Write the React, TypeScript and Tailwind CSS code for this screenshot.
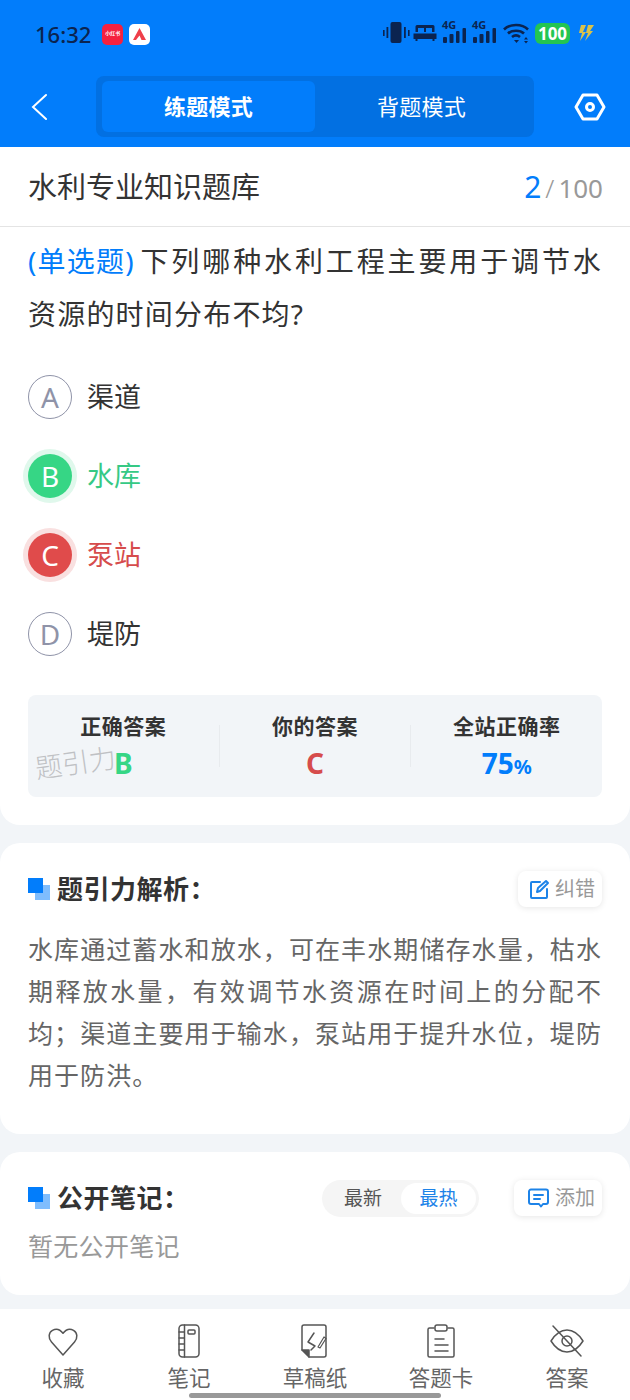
import React from 'react'

const options = [
  { key: 'A', text: '渠道', state: 'normal' },
  { key: 'B', text: '水库', state: 'right' },
  { key: 'C', text: '泵站', state: 'wrong' },
  { key: 'D', text: '堤防', state: 'normal' },
]

const HeadMark = () => (
  <span className="relative mr-[7px] h-[22px] w-[22px] shrink-0">
    <span className="absolute bottom-0 right-0 h-[15px] w-[15px] bg-[#7fbdfd]" />
    <span className="absolute left-0 top-0 h-[15px] w-[15px] bg-[#027dfb]" />
  </span>
)

const StatusIcons = () => (
  <div className="flex items-center text-[#0b2450]">
    <svg width="29" height="24" viewBox="0 0 29 24" fill="currentColor">
      <rect x="8.500" y="1" width="11" height="21" rx="2" />
      <rect x="1" y="9" width="1.600" height="6" />
      <rect x="4.500" y="6" width="1.800" height="11" />
      <rect x="22" y="6" width="1.800" height="11" />
      <rect x="26" y="9" width="1.600" height="6" />
    </svg>
    <svg className="ml-[2px]" width="24" height="20" viewBox="0 0 24 20" fill="currentColor">
      <path d="M4 2h16a1.500 1.500 0 0 1 1.500 1.500V9H2.500V3.500A1.500 1.500 0 0 1 4 2zM0.500 10.500h23V16h-2v2h-2v-2h-15v2h-2v-2h-2z" />
      <rect x="5" y="5" width="6" height="4" fill="#027dfb" />
      <rect x="13" y="5" width="6" height="4" fill="#027dfb" />
    </svg>
    {[0, 1].map((i) => (
      <div key={i} className="relative ml-[5px] h-[22px] w-[25px]">
        <span className="absolute left-0 top-[-3px] text-[11px] font-bold leading-[11px]">4G</span>
        <svg className="absolute bottom-0 left-0" width="25" height="22" viewBox="0 0 25 22" fill="currentColor">
          <rect x="1" y="15" width="4" height="6" rx="1" />
          <rect x="7.500" y="12" width="4" height="9" rx="1" />
          <rect x="14" y="9" width="3.500" height="12" rx="1" />
          <rect x="20.500" y="6" width="3.500" height="15" rx="1" />
        </svg>
      </div>
    ))}
    <svg className="ml-[6px]" width="27" height="22" viewBox="0 0 27 22" fill="none" stroke="currentColor" strokeWidth="2.600">
      <path d="M1 7.500C7 1.500 19 1.500 25 7.500" />
      <path d="M5 11.500C9 7.800 17 7.800 21 11.500" />
      <path d="M9 15c2.500-2 5.500-2 8 0" />
      <path d="M11 18h5l-2.500 3z" fill="currentColor" stroke="none" />
      <path d="M21 17.500l2-2.500 2 2.500zM21 19l2 2.500 2-2.500z" fill="currentColor" stroke="none" />
    </svg>
    <div className="ml-[5px] flex h-[21px] w-[35px] items-center justify-center rounded-[6px] bg-[#23c552] text-[17px] font-bold leading-none text-white">100</div>
    <svg className="ml-[8px]" width="17" height="18" viewBox="0 0 17 18">
      <path d="M3 1h5L5 8h3L2 17l2-8H1z" fill="#d9c24a" />
      <path d="M10 1h6l-4 6h3L7 17l3-8H8z" fill="#d9c24a" />
    </svg>
  </div>
)

const NavIcon = ({ children }: { children: React.ReactNode }) => (
  <svg width="34" height="36" viewBox="0 0 34 36" fill="none" stroke="#555" strokeWidth="1.500" strokeLinecap="round" strokeLinejoin="round">
    {children}
  </svg>
)

const navItems = [
  {
    label: '收藏',
    icon: <path d="M17 32 5.500 19C2 15 2.500 9.500 6.500 7.300c3.500-2 7.500-1 10.500 3 3-4 7-5 10.500-3 4 2.200 4.500 7.700 1 11.700z" />,
  },
  {
    label: '笔记',
    icon: (
      <>
        <rect x="7" y="2" width="20" height="32" rx="3.500" />
        <path d="M12.500 2v32M7 9h5.500M7 15h5.500M7 21h5.500M7 27h5.500" />
        <rect x="16" y="7" width="7" height="4" rx="1" />
      </>
    ),
  },
  {
    label: '草稿纸',
    icon: (
      <>
        <path d="M4 27V4a2 2 0 0 1 2-2h20a2 2 0 0 1 2 2v28a2 2 0 0 1-2 2H11" />
        <path d="M4 27h7v7z" fill="#555" />
        <path d="M16 10l-6 9 7 4-4 4" />
        <path d="M20 24l6-10 2 1.500-6 9.500z" strokeWidth="1.200" />
      </>
    ),
  },
  {
    label: '答题卡',
    icon: (
      <>
        <path d="M10 5H5.500a1.500 1.500 0 0 0-1.500 1.500v26A1.500 1.500 0 0 0 5.500 34h23a1.500 1.500 0 0 0 1.500-1.500v-26A1.500 1.500 0 0 0 28.500 5H24" />
        <rect x="11" y="2" width="12" height="6" rx="2" />
        <path d="M11 16h9M11 22h13M11 28h13" />
      </>
    ),
  },
  {
    label: '答案',
    icon: (
      <>
        <path d="M1 18C6 10 11.500 7 17 7s11 3 16 11c-5 8-10.500 11-16 11S6 26 1 18z" />
        <circle cx="17" cy="18" r="5" />
        <path d="M3 3l28 30" />
      </>
    ),
  },
]

export default function App() {
  return (
    <div
      className="flex h-[1400px] w-[630px] flex-col overflow-hidden bg-[#f2f5f8] text-[#333]"
      style={{ fontFamily: '"Noto Sans", "Noto Sans CJK SC", sans-serif' }}
    >
      <header className="h-[147px] shrink-0 bg-[#027dfb]">
        <div className="flex h-[76px] items-start justify-between pl-[35px] pr-[35px] pt-[21px]">
          <div className="flex items-center">
            <span className="text-[22px] font-medium leading-[26px] text-[#0b2450]">16:32</span>
            <span className="ml-[11px] flex h-[21px] w-[21px] items-center justify-center rounded-[5px] bg-[#f5213f] text-[5px] font-bold text-white">小红书</span>
            <span className="ml-[6px] flex h-[21px] w-[21px] items-center justify-center rounded-[5px] bg-white">
              <svg width="15" height="15" viewBox="0 0 15 15">
                <path d="M7.500 1 14 13H9.500L7.500 8.500 4 13H1z" fill="#ef3f4a" />
              </svg>
            </span>
          </div>
          <StatusIcons />
        </div>
        <div className="flex h-[61px] items-center">
          <button className="flex h-[61px] w-[96px] items-center pl-[31px]">
            <svg width="16" height="28" viewBox="0 0 16 28" fill="none" stroke="#fff" strokeWidth="2" strokeLinecap="round">
              <path d="M15 2 2 14l13 12" />
            </svg>
          </button>
          <div className="flex h-[61px] w-[438px] items-center rounded-[8px] bg-[#0270e2] px-[6px]">
            <div className="flex h-[51px] w-[213px] items-center justify-center rounded-[6px] bg-[#027dfb] text-[22px] font-bold tracking-[0.3px] text-white">练题模式</div>
            <div className="flex-1 text-center text-[22px] tracking-[0.3px] text-white">背题模式</div>
          </div>
          <div className="flex flex-1 justify-end pr-[24px]">
            <svg width="32" height="28" viewBox="0 0 32 28" fill="none" stroke="#fff" strokeWidth="3" strokeLinejoin="round">
              <path d="M9 2h14l7 12-7 12H9L2 14z" />
              <circle cx="16" cy="14" r="3.500" />
            </svg>
          </div>
        </div>
      </header>

      <section className="h-[678px] shrink-0 rounded-b-[20px] bg-white">
        <div className="flex h-[80px] items-center justify-between border-b border-[#e4e4e4] pl-[28px] pr-[27px]">
          <span className="text-[29px] leading-none text-[#333]">水利专业知识题库</span>
          <span className="flex items-baseline">
            <span className="text-[30px] leading-none text-[#027dfb]">2</span>
            <span className="ml-[4px] text-[26px] font-light leading-none text-[#999]">/</span>
            <span className="ml-[4px] text-[26px] leading-none text-[#999]">100</span>
          </span>
        </div>
        <div className="px-[28px] pt-[8px]">
          <p className="text-justify text-[28px] leading-[53px] tracking-[1.200px] text-[#333]">
            <span className="inline-block text-[#027dfb]">(单选题)</span>
            <span className="ml-[4px]">下列哪种水利工程主要用于调节水资源的时间分布不均?</span>
          </p>
          <div className="mt-[34px] flex flex-col gap-[35px]">
            {options.map((o) => (
              <div key={o.key} className="flex h-[44px] items-center">
                {o.state === 'normal' && (
                  <span className="flex h-[44px] w-[44px] items-center justify-center rounded-full border-[1.5px] border-[#8f93a8] text-[28px] text-[#8f93a8]">{o.key}</span>
                )}
                {o.state === 'right' && (
                  <span className="flex h-[44px] w-[44px] items-center justify-center rounded-full bg-[#36d685] text-[28px] text-white shadow-[0_0_0_5px_#e0f8ec]">{o.key}</span>
                )}
                {o.state === 'wrong' && (
                  <span className="flex h-[44px] w-[44px] items-center justify-center rounded-full bg-[#e04b4b] text-[28px] text-white shadow-[0_0_0_5px_#f9e0e0]">{o.key}</span>
                )}
                <span
                  className={
                    o.state === 'right'
                      ? 'ml-[15px] text-[27px] text-[#36c985]'
                      : o.state === 'wrong'
                        ? 'ml-[15px] text-[27px] text-[#d64c4c]'
                        : 'ml-[15px] text-[27px] text-[#333]'
                  }
                >
                  {o.text}
                </span>
              </div>
            ))}
          </div>
          <div className="relative mt-[39px] flex h-[102px] items-center rounded-[8px] bg-[#f2f5f8]">
            {[
              { t: '正确答案', v: 'B', c: 'text-[#36d685]' },
              { t: '你的答案', v: 'C', c: 'text-[#d64c4c]' },
              { t: '全站正确率', v: '75', c: 'text-[#027dfb]' },
            ].map((s, i) => (
              <div key={s.t} className={i < 2 ? 'flex h-[42px] flex-1 items-start justify-center border-r border-[#e8ebee]' : 'flex h-[42px] flex-1 items-start justify-center'}>
                <div className="mt-[-14px] flex flex-col items-center">
                  <span className="text-[21px] font-bold leading-[30px] tracking-[0.5px] text-[#333]">{s.t}</span>
                  <span className={`mt-[4px] text-[28px] font-bold leading-[36px] ${s.c}`}>
                    {s.v}
                    {i === 2 && <span className="text-[20px]">%</span>}
                  </span>
                </div>
              </div>
            ))}
            <span className="absolute left-[7px] top-[54px] rotate-[-8deg] text-[27px] font-light leading-none text-[#bfc1c4]">题引力</span>
          </div>
        </div>
      </section>

      <section className="mt-[18px] h-[291px] shrink-0 rounded-[20px] bg-white px-[28px] pt-[28px]">
        <div className="flex items-center justify-between">
          <div className="flex items-center">
            <HeadMark />
            <span className="text-[26px] font-bold leading-[36px] tracking-[0.5px] text-[#333]">题引力解析：</span>
          </div>
          <span className="flex h-[36px] w-[84px] items-center justify-end rounded-[8px] bg-white pr-[7px] text-[20px] text-[#999] shadow-[0_1px_6px_rgba(0,0,0,0.1)]">
            <svg className="mr-[5px]" width="21" height="21" viewBox="0 0 21 21" fill="none" stroke="#1d83e8" strokeWidth="2" strokeLinecap="round" strokeLinejoin="round">
              <path d="M11 3H3a1 1 0 0 0-1 1v14a1 1 0 0 0 1 1h14a1 1 0 0 0 1-1V10" />
              <path d="M8 13l1-4 8-7 2 2-8 8z" />
            </svg>
            纠错
          </span>
        </div>
        <p className="mt-[21px] text-justify text-[25px] leading-[42px] tracking-[1.050px] text-[#666]">
          水库通过蓄水和放水，可在丰水期储存水量，枯水期释放水量，有效调节水资源在时间上的分配不均；渠道主要用于输水，泵站用于提升水位，堤防用于防洪。
        </p>
      </section>

      <section className="mt-[18px] h-[143px] shrink-0 rounded-[20px] bg-white px-[28px] pt-[28px]">
        <div className="flex h-[36px] items-center">
          <HeadMark />
          <span className="text-[26px] font-bold leading-[36px] tracking-[0.5px] text-[#333]">公开笔记：</span>
          <div className="ml-auto mr-[35px] flex h-[37px] w-[157px] items-center rounded-full bg-[#f5f5f5] p-[3px]">
            <span className="flex-1 text-center text-[19px] text-[#555]">最新</span>
            <span className="flex h-[31px] w-[75px] items-center justify-center rounded-full bg-white text-[19px] text-[#1d83e8]">最热</span>
          </div>
          <span className="flex h-[36px] w-[88px] items-center justify-end rounded-[8px] bg-white pr-[7px] text-[20px] text-[#999] shadow-[0_1px_6px_rgba(0,0,0,0.1)]">
            <svg className="mr-[6px]" width="21" height="20" viewBox="0 0 21 20" fill="none" stroke="#1d83e8" strokeWidth="2" strokeLinecap="round" strokeLinejoin="round">
              <path d="M3 1.500h15a2 2 0 0 1 2 2V14a2 2 0 0 1-2 2h-3l-2 2.500-2-2.500H3a2 2 0 0 1-2-2V3.500a2 2 0 0 1 2-2z" />
              <path d="M6 7h9M6 11h6" />
            </svg>
            添加
          </span>
        </div>
        <p className="mt-[12px] text-[25px] leading-[36px] tracking-[0.3px] text-[#999]">暂无公开笔记</p>
      </section>

      <nav className="relative mt-[14px] flex flex-1 justify-between bg-white px-[4px] pt-[14px]">
        {navItems.map((n) => (
          <div key={n.label} className="flex w-[118px] flex-col items-center">
            <NavIcon>{n.icon}</NavIcon>
            <span className="mt-[3px] text-[21.500px] leading-[32px] text-[#666]">{n.label}</span>
          </div>
        ))}
        <span className="absolute bottom-[2px] left-[189px] h-[5px] w-[252px] rounded-full bg-[#999]" />
      </nav>
    </div>
  )
}
